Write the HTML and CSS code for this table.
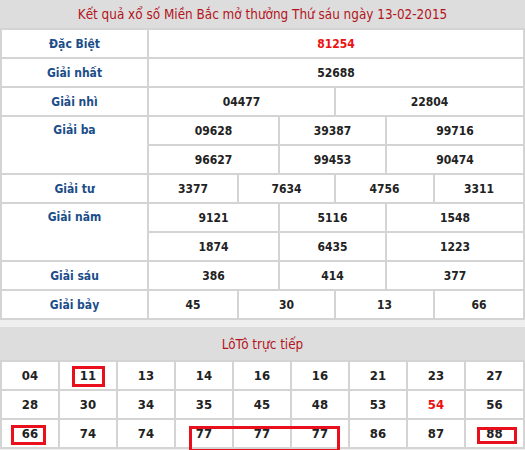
FILE: index.html
```html
<!DOCTYPE html>
<html lang="vi">
<head>
<meta charset="utf-8">
<link rel="stylesheet" href="styles.css">
</head>
<body>
<div class="page">
  <div class="kq">
    <div class="title">Kết quả xổ số Miền Bắc mở thưởng Thứ sáu ngày 13-02-2015</div>

    <div class="lbl">Đặc Biệt</div>
    <div class="val s12 db">81254</div>

    <div class="lbl">Giải nhất</div>
    <div class="val s12">52688</div>

    <div class="lbl">Giải nhì</div>
    <div class="val s6">04477</div>
    <div class="val s6">22804</div>

    <div class="lbl r2">Giải ba</div>
    <div class="val s4">09628</div>
    <div class="val s4">39387</div>
    <div class="val s4">99716</div>
    <div class="val s4">96627</div>
    <div class="val s4">99453</div>
    <div class="val s4">90474</div>

    <div class="lbl">Giải tư</div>
    <div class="val s3">3377</div>
    <div class="val s3">7634</div>
    <div class="val s3">4756</div>
    <div class="val s3">3311</div>

    <div class="lbl r2">Giải năm</div>
    <div class="val s4">9121</div>
    <div class="val s4">5116</div>
    <div class="val s4">1548</div>
    <div class="val s4">1874</div>
    <div class="val s4">6435</div>
    <div class="val s4">1223</div>

    <div class="lbl">Giải sáu</div>
    <div class="val s4">386</div>
    <div class="val s4">414</div>
    <div class="val s4">377</div>

    <div class="lbl">Giải bảy</div>
    <div class="val s3">45</div>
    <div class="val s3">30</div>
    <div class="val s3">13</div>
    <div class="val s3">66</div>
  </div>

  <div class="loto">
    <div class="loto-title">LôTô trực tiếp</div>
    <div class="num">04</div><div class="num">11</div><div class="num">13</div><div class="num">14</div><div class="num">16</div><div class="num">16</div><div class="num">21</div><div class="num">23</div><div class="num">27</div>
    <div class="num">28</div><div class="num">30</div><div class="num">34</div><div class="num">35</div><div class="num">45</div><div class="num">48</div><div class="num">53</div><div class="num hot">54</div><div class="num">56</div>
    <div class="num">66</div><div class="num">74</div><div class="num">74</div><div class="num">77</div><div class="num">77</div><div class="num">77</div><div class="num">86</div><div class="num">87</div><div class="num">88</div>

    <div class="mark m11"></div>
    <div class="mark m66"></div>
    <div class="mark m77"></div>
    <div class="mark m88"></div>
  </div>
</div>
</body>
</html>
```

FILE: styles.css
```css
html, body {
  margin: 0;
  padding: 0;
  background: #ffffff;
}

.page {
  width: 525px;
  height: 450px;
  overflow: hidden;
  background: #efefef;
  font-family: "DejaVu Sans Condensed", "DejaVu Sans", sans-serif;
  font-stretch: condensed;
  font-size: 12px;
}

.kq {
  display: grid;
  grid-template-columns: 145px 28px 28px 28px 39px 26px 26px 23px 24px 46px 28px 28px 28px;
  grid-template-rows: 28px;
  grid-auto-rows: 27px;
  gap: 2px;
  padding: 0 2px 2px 2px;
  background: #d4d4d4;
}

.title {
  grid-column: 1 / -1;
  background: #dddddd;
  color: #b3141c;
  font-size: 13.4px;
  display: flex;
  align-items: center;
  justify-content: center;
  margin: 0 -2px;
}

.lbl {
  background: #ffffff;
  color: #1b4d89;
  font-weight: bold;
  display: flex;
  align-items: center;
  justify-content: center;
}

.lbl.r2 {
  grid-row: span 2;
  align-items: flex-start;
  padding-top: 6px;
}

.val {
  background: #ffffff;
  color: #222222;
  font-weight: bold;
  display: flex;
  align-items: center;
  justify-content: center;
}

.s12 { grid-column: span 12; }
.s6 { grid-column: span 6; }
.s4 { grid-column: span 4; }
.s3 { grid-column: span 3; }

.db { color: #ee1111; }

.loto {
  position: relative;
  margin-top: 7px;
  display: grid;
  grid-template-columns: repeat(8, 56px) 57px;
  grid-template-rows: 33px;
  grid-auto-rows: 27px;
  gap: 2px;
  padding: 0 2px 2px 2px;
  background: #d4d4d4;
}

.loto-title {
  grid-column: 1 / -1;
  background: #dddddd;
  color: #b3141c;
  font-size: 13.4px;
  display: flex;
  align-items: center;
  justify-content: center;
  padding-top: 2px;
  margin: 0 -2px;
}

.num {
  background: #ffffff;
  color: #222222;
  font-weight: bold;
  font-size: 13px;
  display: flex;
  align-items: center;
  justify-content: center;
}

.num.hot { color: #ee1111; }

.mark {
  position: absolute;
  border: 3px solid #e8101c;
  box-sizing: border-box;
}

.m11 { left: 72px; top: 39px; width: 33px; height: 21px; }
.m66 { left: 11px; top: 98px; width: 35px; height: 20px; }
.m77 { left: 189px; top: 99px; width: 151px; height: 26px; }
.m88 { left: 477px; top: 100px; width: 40px; height: 17px; }
```
